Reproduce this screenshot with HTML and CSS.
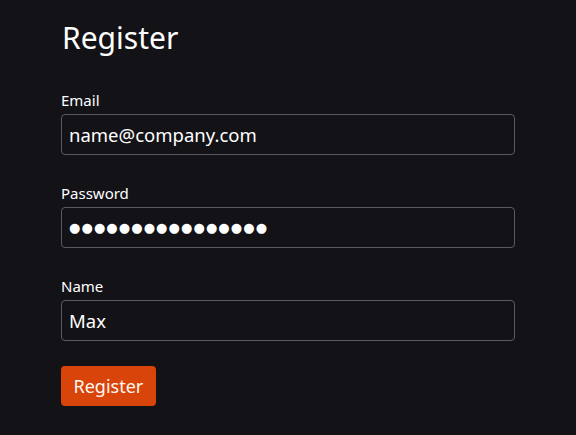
FILE: index.html
```html
<!DOCTYPE html>
<html lang="en">
<head>
<meta charset="utf-8">
<title>Register</title>
<link rel="stylesheet" href="styles.css">
</head>
<body>
<main class="page">
  <h1 class="title">Register</h1>
  <form class="form">
    <div class="field">
      <label class="label" for="email">Email</label>
      <input class="input" id="email" type="email" value="name@company.com">
    </div>
    <div class="field">
      <label class="label" for="password">Password</label>
      <input class="input input-secret" id="password" type="text" value="●●●●●●●●●●●●●●●●">
    </div>
    <div class="field field-last">
      <label class="label" for="name">Name</label>
      <input class="input" id="name" type="text" value="Max">
    </div>
    <button class="button" type="button">Register</button>
  </form>
</main>
</body>
</html>
```
FILE: styles.css
```css
html, body {
  margin: 0;
  padding: 0;
  background: #131217;
  color: #ffffff;
  font-family: "Segoe UI", "Noto Sans", "Open Sans", sans-serif;
}
.page {
  padding: 18px 0 0 61px;
  width: 454px;
}
.title {
  margin: 0 0 32px 1px;
  font-size: 30px;
  font-weight: 400;
  line-height: 40px;
}
.form {
  display: flex;
  flex-direction: column;
}
.field {
  display: flex;
  flex-direction: column;
  margin-bottom: 28px;
}
.field-last {
  margin-bottom: 25px;
}
.label {
  font-size: 15px;
  line-height: 20px;
  margin: 0 0 4px 0;
}
.input {
  box-sizing: border-box;
  height: 41px;
  width: 454px;
  margin: 0;
  padding: 0 7px;
  background: #131217;
  color: #ffffff;
  border: 1px solid #5b5a61;
  border-radius: 4px;
  font-family: inherit;
  font-size: 18.5px;
  outline: none;
}
.input-secret {
  font-family: "DejaVu Sans", sans-serif;
  font-size: 13px;
  letter-spacing: 1.1px;
}
.button {
  align-self: flex-start;
  height: 40px;
  padding: 0 12.5px;
  background: #d8440a;
  color: #fff8f0;
  border: none;
  border-radius: 4px;
  font-family: inherit;
  font-size: 18px;
}
```
